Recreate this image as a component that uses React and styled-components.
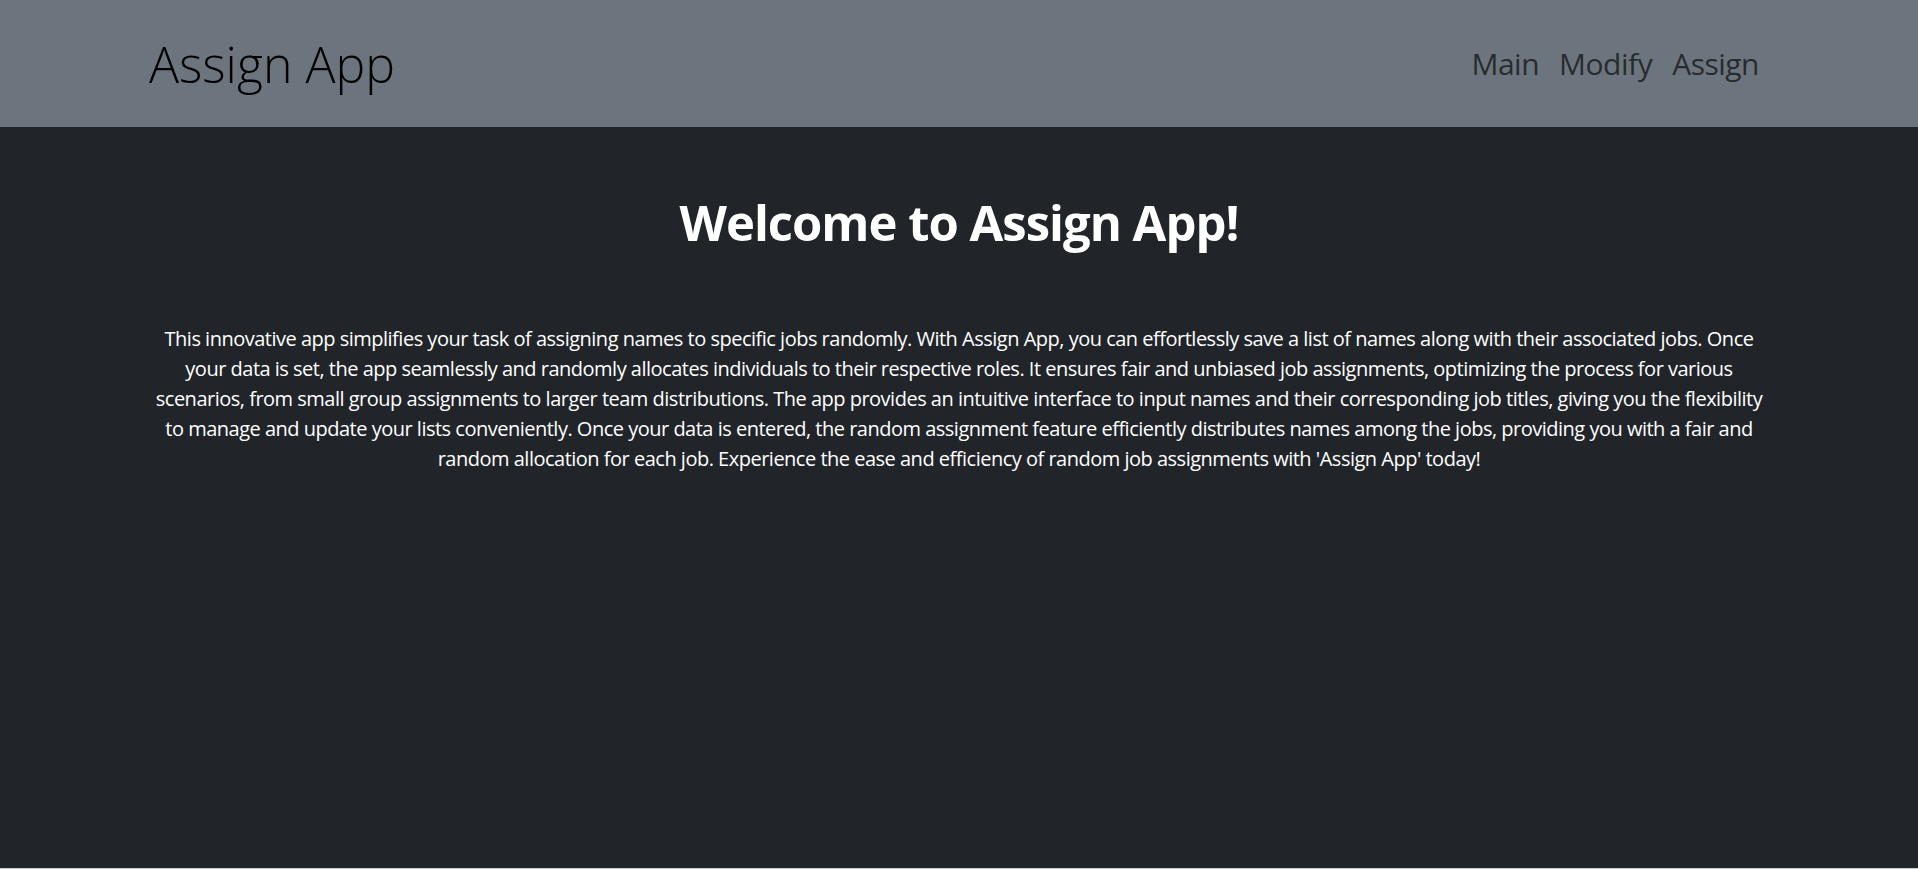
import React from "react";
import styled, { createGlobalStyle } from "styled-components";

const Global = createGlobalStyle`
  html, body {
    margin: 0;
    padding: 0;
    background: #c6ced2;
  }
  body {
    font-family: "Open Sans", "Noto Sans", sans-serif;
  }
  * { box-sizing: border-box; }
`;

const Page = styled.div`
  height: 868px;
  background: #212529;
  display: flex;
  flex-direction: column;
`;

const NavBar = styled.nav`
  background: #6c757d;
  height: 127px;
  display: flex;
  align-items: center;
`;

const Container = styled.div`
  width: 100%;
  max-width: 1650px;
  margin: 0 auto;
  padding: 0 ${(p) => (p.$tight ? 12 : 15)}px;
`;

const NavInner = styled(Container)`
  display: flex;
  align-items: center;
  justify-content: space-between;
`;

const Brand = styled.a`
  font-size: 50px;
  font-weight: 300;
  color: #000;
  text-decoration: none;
  letter-spacing: 0;
  line-height: 1.2;
`;

const NavLinks = styled.div`
  display: flex;
  align-items: center;
`;

const NavLink = styled.a`
  font-size: 30px;
  font-weight: 400;
  color: rgba(0, 0, 0, 0.65);
  text-decoration: none;
  padding: 0 10px;
  letter-spacing: -0.5px;
  line-height: 1.5;
`;

const Main = styled(Container)`
  padding-top: 66px;
  text-align: center;
  color: #fff;
`;

const Title = styled.h1`
  margin: 0 0 72px;
  font-size: 49px;
  font-weight: 700;
  letter-spacing: -1px;
  line-height: 1.2;
`;

const Lead = styled.p`
  margin: 0;
  font-size: 20px;
  line-height: 30px;
  letter-spacing: -0.5px;
`;

export default function App() {
  return (
    <>
      <Global />
      <Page>
        <NavBar>
          <NavInner>
            <Brand href="#">Assign App</Brand>
            <NavLinks>
              <NavLink href="#">Main</NavLink>
              <NavLink href="#">Modify</NavLink>
              <NavLink href="#">Assign</NavLink>
            </NavLinks>
          </NavInner>
        </NavBar>
        <Main $tight>
          <Title>Welcome to Assign App!</Title>
          <Lead>
            This innovative app simplifies your task of assigning names to specific jobs randomly. With Assign App, you can effortlessly save a list of names along with their associated jobs. Once your data is set, the app seamlessly and randomly allocates individuals to their respective roles. It ensures fair and unbiased job assignments, optimizing the process for various scenarios, from small group assignments to larger team distributions. The app provides an intuitive interface to input names and their corresponding job titles, giving you the flexibility to manage and update your lists conveniently. Once your data is entered, the random assignment feature efficiently distributes names among the jobs, providing you with a fair and random allocation for each job. Experience the ease and efficiency of random job assignments with 'Assign App' today!
          </Lead>
        </Main>
      </Page>
    </>
  );
}
